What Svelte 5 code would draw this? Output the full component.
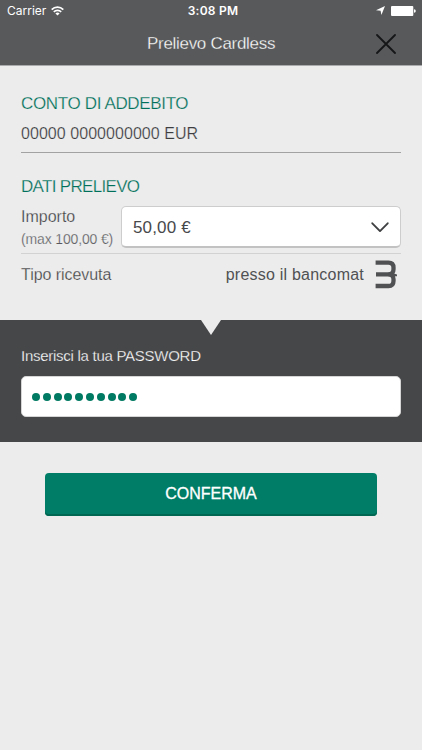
<script>
  const bullets = Array.from({ length: 10 });
</script>

<div class="screen">
  <header>
    <div class="status">
      <div class="carrier">
        <span>Carrier</span>
        <svg width="13" height="10" viewBox="0 0 13 10" fill="none" stroke="#fff" stroke-width="1.7">
          <path d="M.7 3.6a8.2 8.2 0 0 1 11.6 0M2.8 5.9a5.2 5.2 0 0 1 7.4 0" />
          <path d="M6.5 9.6 4.4 7.5a3 3 0 0 1 4.2 0z" fill="#fff" stroke="none" />
        </svg>
      </div>
      <span class="time">3:08 PM</span>
      <div class="power">
        <svg width="9" height="9" viewBox="0 0 9 9"><path d="M9 0 5.4 9 4.6 4.8 0 4.3z" fill="#fff" /></svg>
        <svg width="25" height="10" viewBox="0 0 25 10" fill="#fff">
          <rect width="22.3" height="10" rx="1" /><path d="M23 3.2q1.8 0 1.8 1.8T23 6.8z" />
        </svg>
      </div>
    </div>
    <div class="bar">
      <h1>Prelievo Cardless</h1>
      <svg class="close" width="20" height="20" viewBox="0 0 20 20" fill="none" stroke="#151617" stroke-width="1.8" stroke-linecap="round">
        <path d="M1 1 19 19M19 1 1 19" />
      </svg>
    </div>
  </header>

  <section class="account">
    <h2 class="conto">CONTO DI ADDEBITO</h2>
    <p>00000 0000000000 EUR</p>
  </section>

  <section class="details">
    <h2 class="dati">DATI PRELIEVO</h2>
    <div class="amount">
      <div class="label">
        <span class="importo">Importo</span>
        <span class="max">(max 100,00 €)</span>
      </div>
      <div class="select">
        <span>50,00 €</span>
        <svg width="18" height="11" viewBox="0 0 18 11" fill="none" stroke="#3f4041" stroke-width="1.9" stroke-linecap="round" stroke-linejoin="round">
          <path d="M1.3 1.3 9 9.1l7.7-7.8" />
        </svg>
      </div>
    </div>
    <div class="receipt">
      <span class="tipo">Tipo ricevuta</span>
      <span class="presso">presso il bancomat</span>
      <svg width="23" height="30" viewBox="0 0 23 30" fill="none" stroke="#505153" stroke-width="4.3">
        <path d="M.6 2.6H13.500q5 0 5 5v1.700q0 5-5 5H1" />
        <path d="M13.500 14.300q5 0 5 5v1.700q0 5-5 5H.6" />
        <path d="M16 12.600 22 14.500v1.700h-5z" fill="#505153" stroke="none" />
      </svg>
    </div>
  </section>

  <section class="password">
    <label for="pw">Inserisci la tua PASSWORD</label>
    <div class="field" id="pw">
      {#each bullets as _}
        <i></i>
      {/each}
    </div>
  </section>

  <button>CONFERMA</button>
</div>

<style>
  :global(body) {
    margin: 0;
    background: #ececec;
  }
  .screen {
    width: 422px;
    height: 750px;
    overflow: hidden;
    background: #ececec;
    color: #505153;
    font-family: "Liberation Sans", Arial, sans-serif;
    font-size: 16px;
    display: flex;
    flex-direction: column;
    box-sizing: border-box;
  }
  svg {
    display: block;
    flex: none;
  }
  h1, h2, p {
    margin: 0;
    font-weight: 400;
  }
  span, h1, h2, p, label {
    white-space: nowrap;
  }
  header {
    height: 66px;
    background: #58595b;
    box-sizing: border-box;
    border-bottom: 1px solid #aaabac;
    color: #fff;
  }
  .status {
    height: 22px;
    display: grid;
    grid-template-columns: 1fr auto 1fr;
    align-items: center;
    padding: 0 6px 1px 7px;
    box-sizing: border-box;
    font-family: Inter, Roboto, sans-serif;
    font-size: 12px;
  }
  .carrier {
    display: flex;
    align-items: center;
    gap: 5px;
  }
  .time {
    font-weight: 600;
    letter-spacing: 0.25px;
    padding-left: 3px;
  }
  .power {
    display: flex;
    justify-content: flex-end;
    align-items: center;
    gap: 6px;
  }
  .bar {
    height: 43px;
    display: flex;
    align-items: center;
    justify-content: space-between;
    padding: 0 26px 0 147px;
  }
  h1 {
    font-size: 17px;
    letter-spacing: -0.3px;
    color: #fff;
    -webkit-text-stroke: 0.3px #58595b;
  }
  .account {
    margin: 0 21px;
    height: 87px;
    box-sizing: border-box;
    padding-top: 28px;
    border-bottom: 1px solid #a2a2a2;
  }
  h2 {
    font-size: 17px;
    line-height: 20px;
    color: #00705a;
    -webkit-text-stroke: 0.25px #ececec;
  }
  .conto {
    letter-spacing: -0.35px;
  }
  .dati {
    letter-spacing: -0.68px;
  }
  .account p {
    line-height: 20px;
    margin-top: 10px;
    letter-spacing: 0.05px;
    color: #3c3d3f;
    -webkit-text-stroke: 0.2px #ececec;
  }
  .details {
    margin: 0 21px;
    height: 167px;
    padding-top: 24px;
    box-sizing: border-box;
  }
  .amount {
    display: flex;
    justify-content: space-between;
    height: 57px;
    box-sizing: border-box;
    padding-top: 9px;
    border-bottom: 1px solid #d2d2d2;
  }
  .label {
    display: flex;
    flex-direction: column;
    color: #3c3d3f;
    -webkit-text-stroke: 0.25px #ececec;
  }
  .importo {
    line-height: 20px;
    margin-top: 1px;
  }
  .max {
    font-size: 14px;
    line-height: 20px;
    margin-top: 2px;
    letter-spacing: -0.15px;
    color: #56575a;
  }
  .select {
    width: 280px;
    height: 42px;
    box-sizing: border-box;
    border: 1px solid #cdcdcd;
    border-bottom: 2px solid #c2c2c2;
    border-radius: 5px;
    background: #fff;
    display: flex;
    align-items: center;
    justify-content: space-between;
    padding: 2px 11px 0;
    font-size: 17px;
    letter-spacing: 0.15px;
    color: #48494b;
  }
  .receipt {
    display: flex;
    align-items: center;
    height: 42px;
    padding-right: 3px;
  }
  .tipo {
    color: #3c3d3f;
    -webkit-text-stroke: 0.25px #ececec;
    letter-spacing: -0.05px;
  }
  .presso {
    margin-left: auto;
    margin-right: 11px;
    letter-spacing: 0.22px;
  }
  .password {
    height: 122px;
    background: #464749;
    box-sizing: border-box;
    padding: 26px 21px 0;
    position: relative;
  }
  .password::before {
    content: "";
    position: absolute;
    left: 201px;
    top: 0;
    border: solid transparent;
    border-width: 15px 10px 0;
    border-top-color: #ececec;
  }
  label {
    display: block;
    font-size: 15px;
    line-height: 20px;
    letter-spacing: -0.27px;
    color: #fff;
    -webkit-text-stroke: 0.25px #464749;
  }
  .field {
    margin-top: 10px;
    height: 41px;
    box-sizing: border-box;
    border: 1px solid #d5d5d5;
    border-radius: 5px;
    background: #fff;
    display: flex;
    align-items: center;
    gap: 2.8px;
    padding-left: 10px;
  }
  .field i {
    width: 8px;
    height: 8px;
    border-radius: 50%;
    background: #007a62;
  }
  button {
    margin: 31px 45px 0;
    height: 43px;
    padding: 0 0 2px;
    border: 0;
    border-radius: 4px;
    background: #007d66;
    box-shadow: inset 0 -2px #006753;
    color: #fff;
    font: 16px "Liberation Sans", Arial, sans-serif;
    -webkit-text-stroke: 0.3px #fff;
  }
</style>
